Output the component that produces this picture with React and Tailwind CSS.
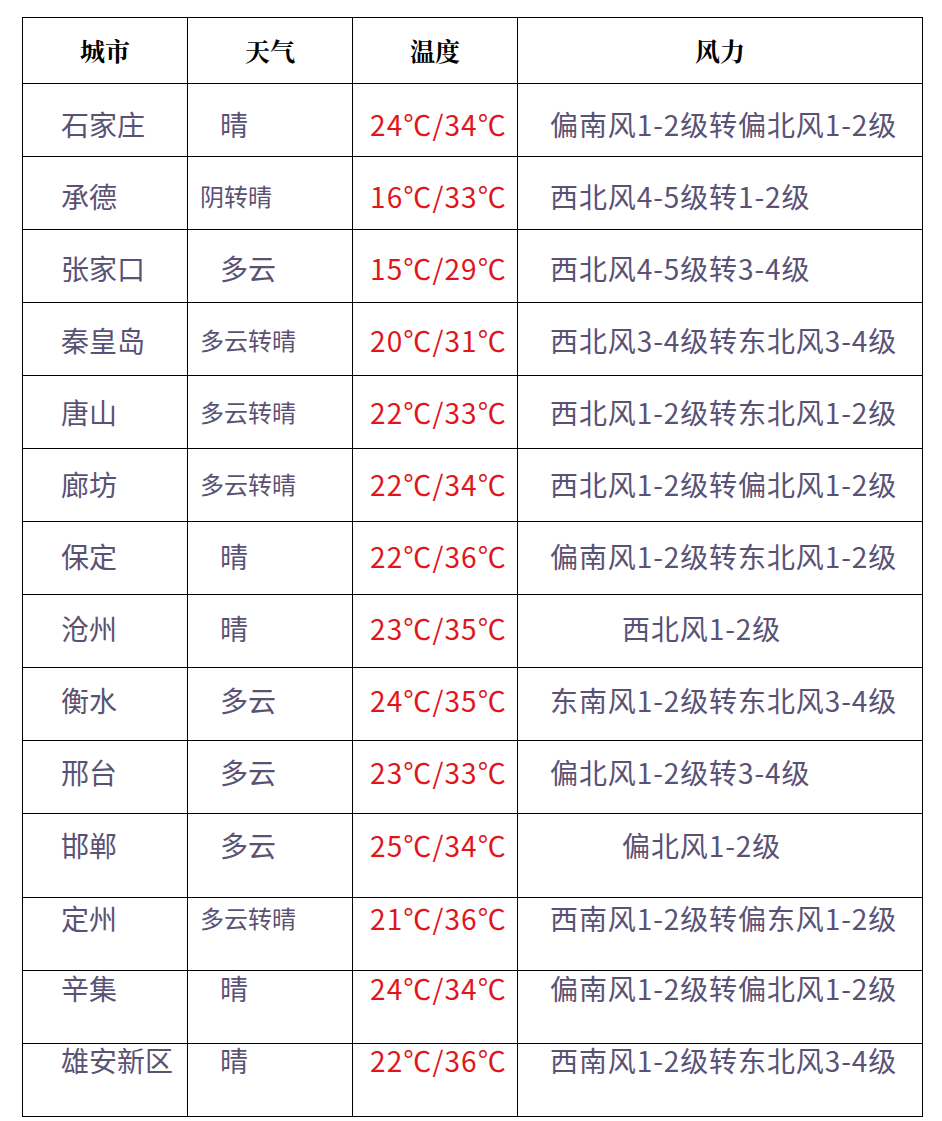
const rows = [
  { city: '石家庄', weather: '晴', temp: '24℃/34℃', wind: '偏南风1-2级转偏北风1-2级', h: 'h-[73px]', pt: 'pt-[26px]' },
  { city: '承德', weather: '阴转晴', temp: '16℃/33℃', wind: '西北风4-5级转1-2级', h: 'h-[73px]', pt: 'pt-[25px]' },
  { city: '张家口', weather: '多云', temp: '15℃/29℃', wind: '西北风4-5级转3-4级', h: 'h-[73px]', pt: 'pt-[24px]' },
  { city: '秦皇岛', weather: '多云转晴', temp: '20℃/31℃', wind: '西北风3-4级转东北风3-4级', h: 'h-[73px]', pt: 'pt-[23px]' },
  { city: '唐山', weather: '多云转晴', temp: '22℃/33℃', wind: '西北风1-2级转东北风1-2级', h: 'h-[73px]', pt: 'pt-[22px]' },
  { city: '廊坊', weather: '多云转晴', temp: '22℃/34℃', wind: '西北风1-2级转偏北风1-2级', h: 'h-[73px]', pt: 'pt-[21px]' },
  { city: '保定', weather: '晴', temp: '22℃/36℃', wind: '偏南风1-2级转东北风1-2级', h: 'h-[73px]', pt: 'pt-[20px]' },
  { city: '沧州', weather: '晴', temp: '23℃/35℃', wind: '西北风1-2级', h: 'h-[73px]', pt: 'pt-[19px]', far: true },
  { city: '衡水', weather: '多云', temp: '24℃/35℃', wind: '东南风1-2级转东北风3-4级', h: 'h-[73px]', pt: 'pt-[18px]' },
  { city: '邢台', weather: '多云', temp: '23℃/33℃', wind: '偏北风1-2级转3-4级', h: 'h-[73px]', pt: 'pt-[17px]' },
  { city: '邯郸', weather: '多云', temp: '25℃/34℃', wind: '偏北风1-2级', h: 'h-[84px]', pt: 'pt-[17px]', far: true },
  { city: '定州', weather: '多云转晴', temp: '21℃/36℃', wind: '西南风1-2级转偏东风1-2级', h: 'h-[73px]', pt: 'pt-[6px]' },
  { city: '辛集', weather: '晴', temp: '24℃/34℃', wind: '偏南风1-2级转偏北风1-2级', h: 'h-[73px]', pt: 'pt-[3px]' },
  { city: '雄安新区', weather: '晴', temp: '22℃/36℃', wind: '西南风1-2级转东北风3-4级', h: 'h-[73px]', pt: 'pt-[2px]' },
]

const cols = 'grid grid-cols-[165px_165px_165px_405px]'
const cell = 'border-r border-b border-black'

const App = () => {
  return (
    <div className="min-h-[1121px] bg-white pl-[22px] pt-[17px] font-['Noto_Sans_CJK_SC',sans-serif]">
      <div className="w-[901px] border-l border-t border-black">
        {/* header */}
        <div className={`${cols} h-[66px] text-[25px] font-bold text-black font-['Noto_Serif_CJK_SC','Noto_Sans_CJK_SC',serif]`}>
          <div className={`${cell} flex items-center justify-center`}>城市</div>
          <div className={`${cell} flex items-center justify-center`}>天气</div>
          <div className={`${cell} flex items-center justify-center`}>温度</div>
          <div className={`${cell} flex items-center justify-center`}>风力</div>
        </div>

        {rows.map((r) => (
          <div key={r.city} className={`${cols} ${r.h} text-[#5a5274]`}>
            <div className={`${cell} ${r.pt} pl-[38px]`}>
              <div className="h-[28px] flex items-center text-[28px] leading-none whitespace-nowrap">{r.city}</div>
            </div>
            <div className={`${cell} ${r.pt} ${r.weather.length > 2 ? 'pl-[12px]' : 'pl-[32px]'}`}>
              <div className={`h-[28px] flex items-center leading-none whitespace-nowrap ${r.weather.length > 2 ? 'text-[24px]' : 'text-[28px]'}`}>
                {r.weather}
              </div>
            </div>
            <div className={`${cell} ${r.pt} pl-[17px]`}>
              <div className="h-[28px] flex items-center text-[28px] leading-none tracking-[1.1px] text-[#e0161b] whitespace-nowrap">{r.temp}</div>
            </div>
            <div className={`${cell} ${r.pt} ${r.far ? 'pl-[104px]' : 'pl-[32px]'}`}>
              <div className="h-[28px] flex items-center text-[28px] leading-none tracking-[0.9px] whitespace-nowrap">{r.wind}</div>
            </div>
          </div>
        ))}
      </div>
    </div>
  )
}

export default App
